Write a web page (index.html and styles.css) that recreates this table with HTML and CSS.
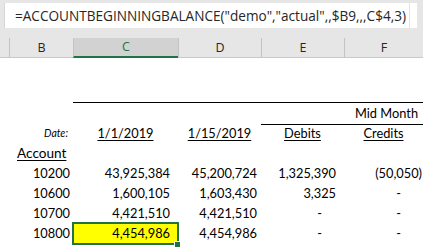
FILE: index.html
```html
<!DOCTYPE html>
<html lang="en">
<head>
  <meta charset="UTF-8">
  <title>Account Beginning Balance</title>
  <link rel="stylesheet" href="styles.css">
</head>
<body>
  <div class="formula-area">
    <div class="formula-box">
      <span class="formula-text">=ACCOUNTBEGINNINGBALANCE("demo","actual",,$B9,,,C$4,3)</span>
      <span class="formula-end"></span>
    </div>
  </div>
  <div class="col-headers">
    <div class="col-head first"></div>
    <div class="col-head">B</div>
    <div class="col-head active">C</div>
    <div class="col-head">D</div>
    <div class="col-head">E</div>
    <div class="col-head">F</div>
  </div>
  <div class="sheet">
    <!-- spacer rows -->
    <div class="row tall"><div></div><div></div><div></div><div></div><div></div><div></div></div>
    <div class="row">
      <div></div><div></div>
      <div class="line"></div><div class="line"></div><div class="line"></div><div class="line"></div>
    </div>
    <div class="row">
      <div></div><div></div><div></div><div></div>
      <div class="line"></div>
      <div class="line"><span class="mid-month">Mid Month</span></div>
    </div>
    <div class="row">
      <div></div>
      <div class="right date-label">Date:</div>
      <div class="center"><u>1/1/2019</u></div>
      <div class="center"><u>1/15/2019</u></div>
      <div class="center"><u>Debits</u></div>
      <div class="center"><u>Credits</u></div>
    </div>
    <div class="row">
      <div></div>
      <div class="account"><u>Account</u></div>
      <div></div><div></div><div></div><div></div>
    </div>
    <div class="row data">
      <div></div>
      <div class="right acct">10200</div>
      <div class="right num-c">43,925,384</div>
      <div class="right num-d">45,200,724</div>
      <div class="right num-e">1,325,390</div>
      <div class="right num-f">(50,050)</div>
    </div>
    <div class="row data">
      <div></div>
      <div class="right acct">10600</div>
      <div class="right num-c">1,600,105</div>
      <div class="right num-d">1,603,430</div>
      <div class="right num-e">3,325</div>
      <div class="right dash">-</div>
    </div>
    <div class="row data">
      <div></div>
      <div class="right acct">10700</div>
      <div class="right num-c">4,421,510</div>
      <div class="right num-d">4,421,510</div>
      <div class="right dash">-</div>
      <div class="right dash">-</div>
    </div>
    <div class="row data">
      <div></div>
      <div class="right acct">10800</div>
      <div class="right num-c selected">4,454,986</div>
      <div class="right num-d">4,454,986</div>
      <div class="right dash">-</div>
      <div class="right dash">-</div>
    </div>
  </div>
</body>
</html>
```

FILE: styles.css
```css
body {
  margin: 0;
  width: 423px;
  height: 249px;
  overflow: hidden;
  background-color: #ffffff;
  font-family: "Lato", "Liberation Sans", sans-serif;
  color: #000000;
}

.formula-area {
  height: 38px;
  background-color: #e6e6e6;
  padding: 3px 0 0 4px;
  box-sizing: border-box;
}

.formula-box {
  display: flex;
  height: 25px;
  width: 413px;
  background-color: #ffffff;
  border-left: 1px solid #d6d6d6;
  box-sizing: border-box;
  align-items: center;
}

.formula-text {
  flex: 1;
  padding-left: 10px;
  font-family: "Open Sans", "Noto Sans", sans-serif;
  font-size: 13.6px;
  letter-spacing: 0;
  color: #262626;
  white-space: nowrap;
  height: 25px;
  line-height: 25px;
  border-right: 1px solid #e3e3e3;
  margin-right: 1px;
}

.formula-end {
  width: 6px;
  height: 25px;
}

.col-headers {
  display: grid;
  grid-template-columns: 9px 64px 105px 83px 83px 1fr;
  height: 20px;
  background-color: #e6e6e6;
  border-bottom: 1px solid #c8c8c8;
  box-sizing: border-box;
}

.col-head {
  border-left: 1px solid #c3c3c3;
  text-align: center;
  font-family: "Open Sans", "Noto Sans", sans-serif;
  font-size: 12.5px;
  line-height: 19px;
  color: #262626;
}

.col-head.first {
  border-left: none;
}

.col-head.active {
  background-color: #d2d2d2;
  color: #217346;
  border-bottom: 2px solid #217346;
  margin-bottom: -1px;
  line-height: 18px;
}

.sheet {
  font-size: 12.8px;
}

.row {
  display: grid;
  grid-template-columns: 9px 64px 105px 83px 83px 1fr;
  height: 20px;
}

.row.tall {
  height: 25px;
}

.row > div {
  line-height: 21px;
  white-space: nowrap;
  box-sizing: border-box;
}

.line {
  border-bottom: 1px solid #000000;
}

.right {
  text-align: right;
}

.center {
  text-align: center;
}

.center u {
  text-underline-offset: 2px;
}

.date-label {
  font-style: italic;
  font-size: 10.5px;
  padding-right: 5px;
}

.account {
  padding-left: 8px;
  font-size: 13.6px;
}

.account u {
  text-underline-offset: 2px;
}

.mid-month {
  display: block;
  padding-left: 11px;
}

.acct {
  padding-right: 3px;
}

.num-c {
  padding-right: 8px;
}

.num-d {
  padding-right: 4px;
}

.num-e {
  padding-right: 8px;
}

.num-f {
  padding-right: 1px;
}

.dash {
  padding-right: 22px;
}

.selected {
  position: relative;
  background-color: #ffff00;
}

.selected::before {
  content: "";
  position: absolute;
  left: -1px;
  right: -1px;
  top: -1px;
  bottom: -1px;
  border: 2px solid #217346;
}

.selected::after {
  content: "";
  position: absolute;
  right: -3px;
  bottom: -4px;
  width: 5px;
  height: 5px;
  background-color: #217346;
  border: 1px solid #ffffff;
}
```
